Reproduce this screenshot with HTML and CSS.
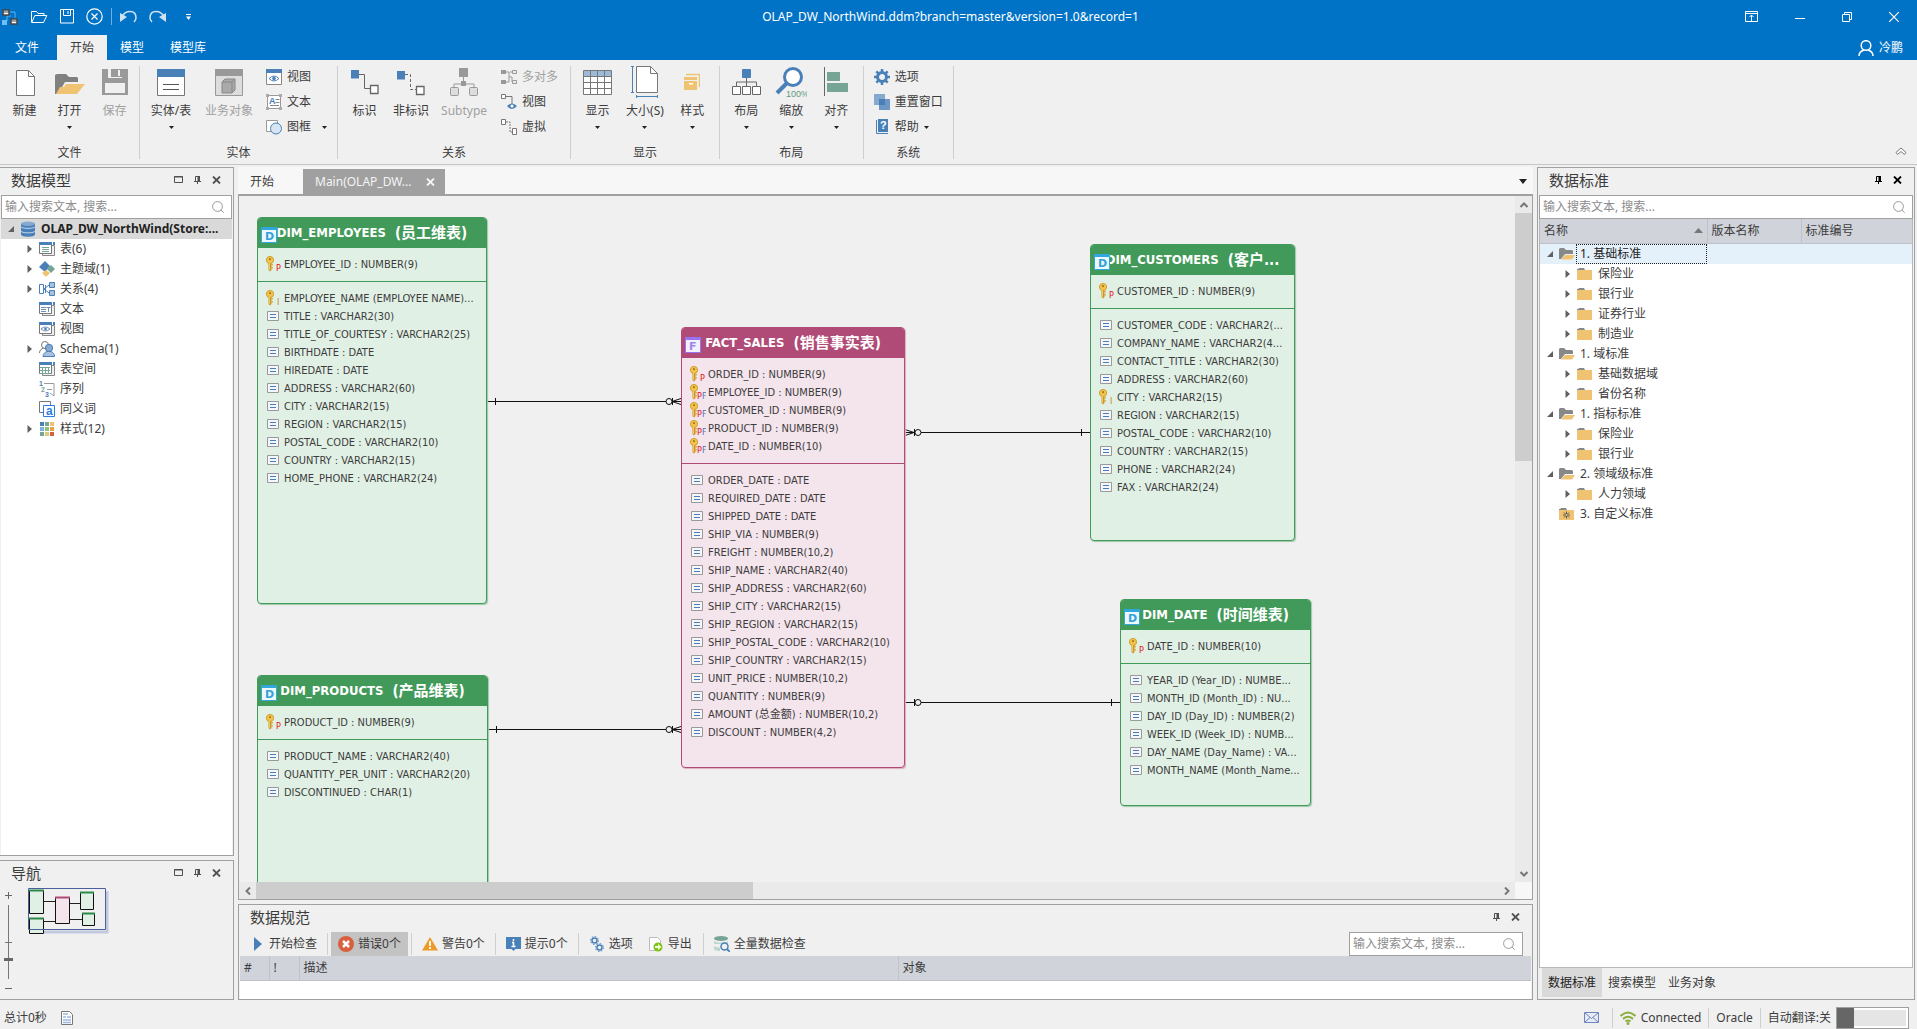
FILE: index.html
```html
<!DOCTYPE html>
<html lang="zh-CN">
<head>
<meta charset="utf-8">
<title>OLAP_DW_NorthWind.ddm</title>
<link rel="stylesheet" href="styles.css">
</head>
<body>
<svg class="sprite" aria-hidden="true">
  <symbol id="caret" viewBox="0 0 5 3"><path d="M0 0h5L2.500 3z" fill="#222"/></symbol>
  <symbol id="search" viewBox="0 0 12 12"><circle cx="5.500" cy="5.500" r="4.900" fill="none" stroke="#999"/><path d="M9 9l2.700 2.700" stroke="#999"/></symbol>
  <symbol id="restore" viewBox="0 0 9 8"><path d="M.5.5h8v6h-8zM0 1h9" fill="none" stroke="currentColor"/></symbol>
  <symbol id="pin" viewBox="0 0 7 8"><path d="M1.500 5V.5h4V5M0 5.500h7M3.500 5v3" fill="none" stroke="currentColor"/><path d="M3.500 0h2.500v5H3.500z" fill="currentColor"/></symbol>
  <symbol id="close" viewBox="0 0 9 8"><path d="M1 .5l7 7M8 .5l-7 7" stroke="currentColor" stroke-width="1.800"/></symbol>
  <symbol id="open-tri" viewBox="0 0 6 6"><path d="M6 0v6H0z" fill="#606060"/></symbol>
  <symbol id="shut-tri" viewBox="0 0 5 8"><path d="M0 0l4.500 4L0 8z" fill="#606060"/></symbol>
  <symbol id="folder" viewBox="0 0 16 16"><path d="M0 3h1l1-1h5l1 2H0z" fill="#888"/><path d="M0 4h15v10H0z" fill="#efc372"/></symbol>
  <symbol id="folder-open" viewBox="0 0 16 16"><path d="M0 3l1-1h4l2 2h6l1 1v3H6l-4 5H0z" fill="#888"/><path d="M6 9h10l-3 4.500H2z" fill="#efc372"/></symbol>
  <symbol id="folder-star" viewBox="0 0 16 16"><path d="M0 3h1l1-1h5l1 2H0z" fill="#888"/><path d="M0 4h15v10H0z" fill="#efc372"/><path d="M7.500 5.500v7M4 9h7M5 6.500l5 5M10 6.500l-5 5" stroke="#555"/><circle cx="7.500" cy="9" r="1" fill="#efc372"/></symbol>
  <symbol id="col" viewBox="0 0 16 16"><path d="M1.500 3.500h11v9h-11z" fill="#f4f6fa" stroke="#999"/><path d="M4 6.500h6M4 9.500h6" stroke="#4b7bb8"/></symbol>
  <symbol id="key" viewBox="0 0 16 16"><path d="M2.500 6h3v8l-1.500 1.500L2.500 14z" fill="#c9962b"/><path d="M5 8h2v1.500H5zM5 11h2v1.500H5z" fill="#dfb14a"/><circle cx="4" cy="4" r="3.600" fill="#f3c54c" stroke="#d09f33"/><circle cx="4" cy="3.200" r="1.100" fill="#a97b22"/><path d="M3.500 7v7" stroke="#f0c861"/></symbol>
  <symbol id="key-p" viewBox="0 0 16 16"><use href="#key" width="16" height="16"/><text x="10" y="15" class="tag-p">P</text></symbol>
  <symbol id="key-i" viewBox="0 0 16 16"><use href="#key" width="16" height="16"/><text x="11" y="15" class="tag-i">I</text></symbol>
  <symbol id="key-pf" viewBox="0 0 16 16"><use href="#key" width="16" height="16"/><text x="7" y="15" class="tag-p">P</text><text x="12" y="15" class="tag-f">F</text></symbol>
  <symbol id="dim" viewBox="0 0 16 16"><path d="M.5.5h15v15H.5z" fill="#edf7fc" stroke="#31a8dc"/><path d="M0 0h16v3H0z" fill="#31a8dc"/><text x="4" y="13" class="kind-d">D</text></symbol>
  <symbol id="fact" viewBox="0 0 16 16"><path d="M.5.5h15v15H.5z" fill="#f3effe" stroke="#9673f0"/><path d="M0 0h16v3H0z" fill="#9673f0"/><text x="4" y="13" class="kind-f">F</text></symbol>
  <symbol id="win" viewBox="0 0 16 16"><path d="M3.500 4.500h12v10h-12z" fill="#eee" stroke="#888"/><path d="M.5 1.500h12v11H.5z" fill="#fff" stroke="#777"/><path d="M0 1h13v3H0zM14 1h2v3h-2z" fill="#4a80b8"/></symbol>
</svg>

<header class="titlebar">
  <div class="quick">
    <svg width="17" height="18" viewBox="0 0 17 18"><path d="M8 4h5v6M5 13v-5h4" fill="none" stroke="#5cb3f0"/><path d="M1 2h6v5H1zM9 11h6v5H9z" fill="#fff" stroke="#444" stroke-width="1.500"/><path d="M1 4h6M9 13h6" stroke="#444"/><path d="M0 12h5v5H0z" fill="#6ec0f7"/></svg>
    <button aria-label="打开"><svg width="17" height="14" viewBox="0 0 17 14"><path d="M.5 12.500V1.500h5l1.500 2h6v2M.8 12.500l3-7h12l-3.300 7z" fill="none" stroke="#fff"/></svg></button>
    <button aria-label="保存"><svg width="14" height="15" viewBox="0 0 14 15"><path d="M.5.5h13v13.500H.5zM3.500.5v6h7v-6M8 2v3" fill="none" stroke="#fff"/></svg></button>
    <button aria-label="关闭文件"><svg width="17" height="17" viewBox="0 0 17 17"><circle cx="8.500" cy="8.500" r="7.700" fill="none" stroke="#fff" stroke-width="1.200"/><path d="M5.500 5.500l6 6M11.500 5.500l-6 6" stroke="#fff" stroke-width="1.200"/></svg></button>
    <i class="bar"></i>
    <button aria-label="撤销"><svg width="17" height="13" viewBox="0 0 17 13"><path d="M2 7c3-7 14-8 14 1 0 1-1 3-2 4" fill="none" stroke="#d0e2f2" stroke-width="1.500"/><path d="M0 3v9l7-5z" fill="#d0e2f2"/></svg></button>
    <button aria-label="重做"><svg width="17" height="13" viewBox="0 0 17 13"><path d="M15 7C12 0 1-1 1 8c0 1 1 3 2 4" fill="none" stroke="#d0e2f2" stroke-width="1.500"/><path d="M17 3v9l-7-5z" fill="#d0e2f2"/></svg></button>
    <button aria-label="自定义"><svg width="5" height="6" viewBox="0 0 5 6"><path d="M0 .5h5" stroke="#fff"/><path d="M0 2.500h5L2.500 6z" fill="#fff"/></svg></button>
  </div>
  <h1>OLAP_DW_NorthWind.ddm?branch=master&amp;version=1.0&amp;record=1</h1>
  <div class="winbtns">
    <button aria-label="功能区"><svg width="13" height="11" viewBox="0 0 13 11"><path d="M.5.5h12v10H.5zM0 2.500h13M6.500 4v6M4.500 6l2-2 2 2" fill="none" stroke="#fff"/></svg></button>
    <button aria-label="最小化"><svg width="10" height="11" viewBox="0 0 10 11"><path d="M0 7.500h10" stroke="#fff"/></svg></button>
    <button aria-label="还原"><svg width="10" height="10" viewBox="0 0 10 10"><path d="M.5 2.500h7v7h-7zM2.500 2V.5h7v7H8" fill="none" stroke="#fff"/></svg></button>
    <button aria-label="关闭"><svg width="10" height="10" viewBox="0 0 10 10"><path d="M0 0l10 10M10 0L0 10" stroke="#fff" stroke-width="1.200"/></svg></button>
  </div>
</header>

<nav class="menubar">
  <button>文件</button><button class="on">开始</button><button>模型</button><button>模型库</button>
  <a class="user" href="#user"><svg width="16" height="16" viewBox="0 0 16 16"><circle cx="8" cy="5.500" r="4.800" fill="none" stroke="#fff" stroke-width="1.500"/><path d="M1 16c0-3 2-5 5-6M15 16c0-3-2-5-5-6" fill="none" stroke="#fff" stroke-width="1.500"/></svg>冷鹏</a>
</nav>

<section class="ribbon">
  <div class="group tight">
    <div class="tools">
      <button class="big"><svg width="28" height="32" viewBox="0 0 28 32"><path d="M5.500 4.500h12l6 6v19h-18z" fill="#fff" stroke="#777"/><path d="M17.500 4.500v6h6" fill="none" stroke="#777"/></svg>新建</button>
      <button class="big"><svg width="30" height="32" viewBox="0 0 30 32"><path d="M0 28V9l2-1h9l3 3h8l1 1v4H10L3 28z" fill="#808080"/><path d="M11 18h19l-8 10H1l4-7h4z" fill="#efc372"/></svg>打开<svg class="caret" width="5" height="3"><use href="#caret"/></svg></button>
      <button class="big" disabled><svg width="26" height="32" viewBox="0 0 26 32"><path d="M0 3h26v26H0z" fill="#9a9a9a"/><path d="M6 3h14v9H6zM3 17h20v10H3z" fill="#f0f0f0"/><path d="M9 3h11v8H9z" fill="#9a9a9a"/><path d="M16 4h2v6h-2zM6 3h2v9H6z" fill="#f0f0f0"/></svg>保存</button>
    </div>
    <h2>文件</h2>
  </div>
  <div class="group tight">
    <div class="tools">
      <button class="big wide"><svg width="28" height="32" viewBox="0 0 28 32"><path d="M.5 3.500h27v26H.5z" fill="#fff" stroke="#777"/><path d="M0 3h28v8H0z" fill="#4a80b8"/><path d="M6 18.500h16M6 23.500h16" stroke="#555"/></svg>实体/表<svg class="caret" width="5" height="3"><use href="#caret"/></svg></button>
      <button class="big wide" disabled><svg width="28" height="32" viewBox="0 0 28 32"><path d="M.5 3.500h27v26H.5z" fill="#ddd" stroke="#999"/><path d="M0 3h28v7H0z" fill="#999"/><path d="M7 16l3-3h10v11l-3 3H7z" fill="#aaa" stroke="#888"/><path d="M7 16h10v11M17 16l3-3" fill="none" stroke="#888"/></svg>业务对象</button>
      <div class="smalls">
        <button><svg width="16" height="16" viewBox="0 0 16 16"><path d="M.5.5h15v15H.5z" fill="#fff" stroke="#888"/><path d="M0 0h16v4H0z" fill="#4a80b8"/><path d="M3 9.500q5-5 10 0q-5 5-10 0z" fill="none" stroke="#4a80b8"/><circle cx="8" cy="9.500" r="1.800" fill="#4a80b8"/></svg>视图</button>
        <button><svg width="16" height="16" viewBox="0 0 16 16"><path d="M1.500 1.500h13v13h-13z" fill="#fff" stroke="#999"/><path d="M0 0h3v3H0zM13 0h3v3h-3zM0 13h3v3H0zM13 13h3v3h-3z" fill="#aaa"/><path d="M9.500 5.500h4M9.500 8.500h4M4 11.500h9" stroke="#888"/><text x="3" y="10" class="glyph">A</text></svg>文本</button>
        <button><svg width="16" height="16" viewBox="0 0 16 16"><path d="M.5 1.500h11v11H.5z" fill="#fff" stroke="#999"/><circle cx="10" cy="9.500" r="5.500" fill="#d7e4f2" stroke="#4a80b8"/></svg>图框<svg class="caret" width="5" height="3"><use href="#caret"/></svg></button>
      </div>
    </div>
    <h2>实体</h2>
  </div>
  <div class="group">
    <div class="tools">
      <button class="big"><svg width="30" height="32" viewBox="0 0 30 32"><path d="M9 8.500h5.500v14H20" fill="none" stroke="#666"/><path d="M1 4h8v8.500H1z" fill="#4a80b8"/><path d="M20.500 19.500h7.500v8h-7.500z" fill="#fff" stroke="#666" stroke-width="1.300"/></svg>标识</button>
      <button class="big"><svg width="30" height="32" viewBox="0 0 30 32"><path d="M9 8.500h5.500v15H20" fill="none" stroke="#666" stroke-dasharray="3 2"/><path d="M1 5h8v8.500H1z" fill="#4a80b8"/><path d="M20.500 20.500h7.500v8h-7.500z" fill="#fff" stroke="#666" stroke-width="1.300"/></svg>非标识</button>
      <button class="big" disabled><svg width="28" height="32" viewBox="0 0 28 32"><path d="M13.500 10v8M4 22v-4h20v4" fill="none" stroke="#999"/><path d="M9 2h9v9H9zM11 15h5v5h-5z" fill="#999"/><rect x=".5" y="21.500" width="8" height="8" rx="1" fill="#ddd" stroke="#999"/><rect x="19.500" y="21.500" width="8" height="8" rx="1" fill="#ddd" stroke="#999"/></svg>Subtype</button>
      <div class="smalls">
        <button disabled><svg width="16" height="16" viewBox="0 0 16 16"><path d="M5 3h3v10H5M11 3H9M8 8h3v5" fill="none" stroke="#999"/><path d="M0 1h5v4H0zM0 11h5v4H0z" fill="#999"/><path d="M11.500 1.500h4v3h-4zM11.500 11.500h4v3h-4z" fill="#eee" stroke="#999"/></svg>多对多</button>
        <button><svg width="16" height="16" viewBox="0 0 16 16"><path d="M4 2.500h7V10" fill="none" stroke="#777"/><path d="M.5.500h4v4h-4z" fill="#fff" stroke="#777"/><path d="M6 12q5-5 10 0q-5 6-10 0z" fill="#4a80b8"/><circle cx="11" cy="12" r="1.500" fill="#fff"/></svg>视图</button>
        <button><svg width="16" height="16" viewBox="0 0 16 16"><path d="M5 3h4v10h2" fill="none" stroke="#777" stroke-dasharray="2 1"/><path d="M.5.5h4v5h-4zM11.500 9.500h4v6h-4z" fill="#fff" stroke="#777"/></svg>虚拟</button>
      </div>
    </div>
    <h2>关系</h2>
  </div>
  <div class="group">
    <div class="tools">
      <button class="big"><svg width="29" height="32" viewBox="0 0 29 32"><path d="M.5 4.500h28v24H.5z" fill="#fff" stroke="#777"/><path d="M1 5h27v5H1z" fill="#9dbad8"/><path d="M0 10.500h29M0 16.500h29M0 22.500h29M7.500 4v24M14.500 4v24M21.500 4v24" stroke="#777"/></svg>显示<svg class="caret" width="5" height="3"><use href="#caret"/></svg></button>
      <button class="big"><svg width="27" height="32" viewBox="0 0 27 32"><path d="M5.500.5h14l7 7v19h-21z" fill="#fff" stroke="#777"/><path d="M19.500.5v7h7" fill="none" stroke="#777"/><path d="M1.500 0v27M0 .5h3M0 26.500h3M5 30.500h22M5.500 29v3M26.500 29v3" stroke="#4a80b8"/></svg>大小(S)<svg class="caret" width="5" height="3"><use href="#caret"/></svg></button>
      <button class="big"><svg width="16" height="32" viewBox="0 0 16 32"><path d="M2 8.500h13.500V21" fill="none" stroke="#efc372" stroke-width="1.500"/><path d="M0 11h13v3H0zM0 15h13v9H0z" fill="#efc372"/><path d="M5 17h4v1.500H5z" fill="#fff"/></svg>样式<svg class="caret" width="5" height="3"><use href="#caret"/></svg></button>
    </div>
    <h2>显示</h2>
  </div>
  <div class="group">
    <div class="tools">
      <button class="big"><svg width="29" height="32" viewBox="0 0 29 32"><path d="M14.500 11v10M4.500 21v-5h20v5" fill="none" stroke="#666"/><rect x="10" y="3" width="9" height="9" rx="1" fill="#4a80b8"/><path d="M.5 20.500h8v8h-8zM10.500 20.500h8v8h-8zM20.500 20.500h8v8h-8z" fill="#fff" stroke="#666"/></svg>布局<svg class="caret" width="5" height="3"><use href="#caret"/></svg></button>
      <button class="big"><svg width="32" height="32" viewBox="0 0 32 32"><circle cx="18" cy="11" r="8.500" fill="#fff" stroke="#4a80b8" stroke-width="3"/><path d="M12 17l-10 10" stroke="#4a80b8" stroke-width="4"/><text x="11" y="31" class="percent">100%</text></svg>缩放<svg class="caret" width="5" height="3"><use href="#caret"/></svg></button>
      <button class="big"><svg width="24" height="32" viewBox="0 0 24 32"><path d="M.5 1v29" stroke="#666"/><path d="M3 6h13v9H3zM3 17h21v9H3z" fill="#77a595"/></svg>对齐<svg class="caret" width="5" height="3"><use href="#caret"/></svg></button>
    </div>
    <h2>布局</h2>
  </div>
  <div class="group tight">
    <div class="tools">
      <div class="smalls">
        <button><svg width="16" height="16" viewBox="0 0 16 16"><circle cx="8" cy="8" r="4.500" fill="none" stroke="#4a80b8" stroke-width="3"/><path d="M8 0v3M8 13v3M0 8h3M13 8h3M2.300 2.300l2 2M11.700 11.700l2 2M13.700 2.300l-2 2M4.300 11.700l-2 2" stroke="#4a80b8" stroke-width="2.500"/></svg>选项</button>
        <button><svg width="16" height="16" viewBox="0 0 16 16"><path d="M0 0h11v11H0z" fill="#86a9d0"/><path d="M5 5h11v11H5z" fill="#6c97c6"/><path d="M5 5h6v6H5z" fill="#4a80b8"/></svg>重置窗口</button>
        <button><svg width="16" height="16" viewBox="0 0 16 16"><path d="M4 0h10v13H4z" fill="#4a80b8"/><path d="M2.500 1v13.500H14" fill="none" stroke="#4a80b8"/><text x="6" y="10" class="glyph-w">?</text></svg>帮助<svg width="5" height="3"><use href="#caret"/></svg></button>
      </div>
    </div>
    <h2>系统</h2>
  </div>
  <button class="collapse" aria-label="折叠功能区"><svg width="12" height="9" viewBox="0 0 12 9"><path d="M1 5.500L6 1l5 4.500-1.500 2L6 4.500l-3.500 3z" fill="#fff" stroke="#777"/></svg></button>
</section>

<main>
  <aside class="left">
    <section class="panel grow">
      <div class="caption"><h3>数据模型</h3><button aria-label="窗口"><svg width="9" height="8"><use href="#restore"/></svg></button><button aria-label="固定"><svg width="7" height="8"><use href="#pin"/></svg></button><button aria-label="关闭"><svg width="9" height="8"><use href="#close"/></svg></button></div>
      <label class="search"><input type="text" placeholder="输入搜索文本, 搜索..." aria-label="搜索模型"><svg width="12" height="12"><use href="#search"/></svg></label>
      <ul class="tree">
        <li class="root"><svg class="tri" width="6" height="6"><use href="#open-tri"/></svg><svg class="ico" width="16" height="16" viewBox="0 0 16 16"><path d="M1 2.500v11c0 3 14 3 14 0v-11z" fill="#4a80b8"/><path d="M1 5.500c0 2.500 14 2.500 14 0M1 10c0 2.500 14 2.500 14 0" fill="none" stroke="#c6d8ec"/><ellipse cx="8" cy="2.700" rx="7" ry="2.200" fill="#86a9d0"/></svg>OLAP_DW_NorthWind(Store:...</li>
        <li><svg class="tri" width="5" height="8"><use href="#shut-tri"/></svg><svg class="ico" width="16" height="16" viewBox="0 0 16 16"><use href="#win" width="16" height="16"/><path d="M3 6.500h7M3 8.500h7M3 10.500h7" stroke="#77a595"/></svg>表(6)</li>
        <li><svg class="tri" width="5" height="8"><use href="#shut-tri"/></svg><svg class="ico" width="16" height="16" viewBox="0 0 16 16"><path d="M6 0l5 5-5 6-6-5z" fill="#4a80b8"/><path d="M12 4l4 4-4 4-4-4z" fill="#77a595"/><path d="M7 9l4 3-4 4-4-4z" fill="#efc372"/></svg>主题域(1)</li>
        <li><svg class="tri" width="5" height="8"><use href="#shut-tri"/></svg><svg class="ico" width="16" height="16" viewBox="0 0 16 16"><path d="M.5 3.500h4v9h-4z" fill="#fff" stroke="#4a80b8"/><path d="M5 8l5-4M5 8l5 4M6.500 4v8" stroke="#4a80b8" fill="none"/><path d="M10.500 1.500h5v5h-5zM10.500 9.500h5v5h-5z" fill="#a8c1de" stroke="#4a80b8"/></svg>关系(4)</li>
        <li><i class="tri"></i><svg class="ico" width="16" height="16" viewBox="0 0 16 16"><use href="#win" width="16" height="16"/><path d="M2 6.500h5M2 8.500h5M2 10.500h5M7.500 6.500h4M9.500 6v5" stroke="#6b8fb5"/></svg>文本</li>
        <li><i class="tri"></i><svg class="ico" width="16" height="16" viewBox="0 0 16 16"><use href="#win" width="16" height="16"/><path d="M2 8q4.500-4 9 0q-4.500 4-9 0z" fill="none" stroke="#6b8fb5"/><circle cx="6.500" cy="8" r="1.300" fill="#4a80b8"/></svg>视图</li>
        <li><svg class="tri" width="5" height="8"><use href="#shut-tri"/></svg><svg class="ico" width="16" height="16" viewBox="0 0 16 16"><circle cx="6" cy="4" r="3.500" fill="#fff" stroke="#777"/><path d="M.5 12c0-3 2-4 4-5" fill="none" stroke="#777"/><circle cx="10" cy="7" r="3.700" fill="#86a9d0" stroke="#4a80b8"/><path d="M4 15.500c0-3 2-4 4-5h4c2 1 3.500 2 3.500 5z" fill="#a8c1de" stroke="#4a80b8"/></svg>Schema(1)</li>
        <li><i class="tri"></i><svg class="ico" width="16" height="16" viewBox="0 0 16 16"><use href="#win" width="16" height="16"/><path d="M1 6.500h10M1 9.500h10M1 12.500h10M3.500 6v7M6.500 6v7M9.500 6v7" stroke="#77a595"/></svg>表空间</li>
        <li><i class="tri"></i><svg class="ico" width="16" height="16" viewBox="0 0 16 16"><path d="M5 2.500h10V15l-4-3M8 8.500h5" fill="none" stroke="#999"/><text x="0" y="5" class="seq">1</text><text x="2" y="11" class="seq g">2</text><text x="6" y="16" class="seq">3</text></svg>序列</li>
        <li><i class="tri"></i><svg class="ico" width="16" height="16" viewBox="0 0 16 16"><path d="M.5.5h11v11H.5z" fill="#fff" stroke="#777"/><path d="M4.500 4.500h11v11h-11z" fill="#fff" stroke="#2b7de0"/><text x="7" y="14" class="syn">a</text></svg>同义词</li>
        <li><svg class="tri" width="5" height="8"><use href="#shut-tri"/></svg><svg class="ico" width="16" height="16" viewBox="0 0 16 16"><path d="M1 1h4v4H1z" fill="#4a80b8"/><path d="M6 1h4v4H6zM1 11h4v4H1z" fill="#77a595"/><path d="M11 1h4v4h-4z" fill="#efc372"/><path d="M1 6h4v4H1z" fill="#7fb3d8"/><path d="M6 6h4v4H6z" fill="#8cc07c"/><path d="M11 6h4v4h-4z" fill="#e8a33c"/><path d="M6 11h4v4H6z" fill="#d9cc7a"/><path d="M11 11h4v4h-4z" fill="#d9603f"/></svg>样式(12)</li>
      </ul>
    </section>
    <section class="panel navigator">
      <div class="caption"><h3>导航</h3><button aria-label="窗口"><svg width="9" height="8"><use href="#restore"/></svg></button><button aria-label="固定"><svg width="7" height="8"><use href="#pin"/></svg></button><button aria-label="关闭"><svg width="9" height="8"><use href="#close"/></svg></button></div>
      <div class="overview">
        <div class="zoomer">
          <button aria-label="放大"><svg width="7" height="7" viewBox="0 0 7 7"><path d="M0 3.500h7M3.500 0v7" stroke="#666"/></svg></button>
          <input type="range" min="0" max="100" value="25" aria-label="缩放比例">
          <button aria-label="缩小"><svg width="7" height="7" viewBox="0 0 7 7"><path d="M0 3.500h7" stroke="#666"/></svg></button>
        </div>
        <svg class="map" width="82" height="48" viewBox="0 0 82 48">
          <path d="M79 3v41H3" fill="none" stroke="#c3c9dd" stroke-width="3"/>
          <path d="M.5.5h77v41H.5z" fill="#f0f0f0" stroke="#4a5f9b"/>
          <path d="M16 13.500h12M16 33.500h12M41 15.500h12M41 31.500h14" stroke="#222"/>
          <path d="M1.500 2.500h14v23h-14zM1.500 30.500h14v15h-14zM52.500 4.500h13v17h-13zM54.500 25.500h12v12h-12z" fill="#e1f0e5" stroke="#111"/>
          <path d="M1 2.500h15M1 30.500h15M52 4.500h14M54 25.500h13" stroke="#2c8a48" stroke-width="2"/>
          <path d="M27.500 9.500h14v26h-14z" fill="#f4e4ec" stroke="#111"/><path d="M27 9.500h15" stroke="#b04a76" stroke-width="2"/>
          <path d="M1 41.500h76" stroke="#4a5f9b"/>
        </svg>
      </div>
    </section>
  </aside>

  <div class="center">
    <section class="document">
      <div class="doctabs">
        <button>开始</button>
        <div class="doctab"><button>Main(OLAP_DW...</button><button aria-label="关闭标签"><svg width="9" height="8"><use href="#close"/></svg></button></div>
        <button class="more" aria-label="标签列表"><svg width="8" height="5"><use href="#caret"/></svg></button>
      </div>
      <div class="viewport">
        <div class="canvas">
          <svg class="wires" width="1276" height="686" viewBox="0 0 1276 686" aria-hidden="true">
            <path d="M248 205.500h194M249 533.500h193M666 236.500h185M666 506.500h215" stroke="#111"/>
            <path d="M256.500 202v7M257.500 530v7M842.500 233v7M872.500 503v7M433.500 202v7M433.500 530v7M675.500 233v7M675.500 503v7" stroke="#111"/>
            <path d="M433 205.500l9-3M433 205.500l9 3M433 533.500l9-3M433 533.500l9 3M675 236.500l-9-3M675 236.500l-9 3" stroke="#111"/>
            <g fill="#f0f0f0" stroke="#111"><circle cx="430" cy="205.500" r="3"/><circle cx="430" cy="533.500" r="3"/><circle cx="679" cy="236.500" r="3"/><circle cx="679" cy="506.500" r="3"/></g>
          </svg>

          <article class="entity employees">
            <h4><svg width="16" height="16"><use href="#dim"/></svg>DIM_EMPLOYEES <span>(员工维表)</span></h4>
            <ul><li><svg width="16" height="16"><use href="#key-p"/></svg>EMPLOYEE_ID : NUMBER(9)</li></ul>
            <ul>
              <li><svg width="16" height="16"><use href="#key-i"/></svg>EMPLOYEE_NAME (EMPLOYEE NAME)...</li>
              <li><svg width="16" height="16"><use href="#col"/></svg>TITLE : VARCHAR2(30)</li>
              <li><svg width="16" height="16"><use href="#col"/></svg>TITLE_OF_COURTESY : VARCHAR2(25)</li>
              <li><svg width="16" height="16"><use href="#col"/></svg>BIRTHDATE : DATE</li>
              <li><svg width="16" height="16"><use href="#col"/></svg>HIREDATE : DATE</li>
              <li><svg width="16" height="16"><use href="#col"/></svg>ADDRESS : VARCHAR2(60)</li>
              <li><svg width="16" height="16"><use href="#col"/></svg>CITY : VARCHAR2(15)</li>
              <li><svg width="16" height="16"><use href="#col"/></svg>REGION : VARCHAR2(15)</li>
              <li><svg width="16" height="16"><use href="#col"/></svg>POSTAL_CODE : VARCHAR2(10)</li>
              <li><svg width="16" height="16"><use href="#col"/></svg>COUNTRY : VARCHAR2(15)</li>
              <li><svg width="16" height="16"><use href="#col"/></svg>HOME_PHONE : VARCHAR2(24)</li>
            </ul>
          </article>

          <article class="entity products">
            <h4><svg width="16" height="16"><use href="#dim"/></svg>DIM_PRODUCTS <span>(产品维表)</span></h4>
            <ul><li><svg width="16" height="16"><use href="#key-p"/></svg>PRODUCT_ID : NUMBER(9)</li></ul>
            <ul>
              <li><svg width="16" height="16"><use href="#col"/></svg>PRODUCT_NAME : VARCHAR2(40)</li>
              <li><svg width="16" height="16"><use href="#col"/></svg>QUANTITY_PER_UNIT : VARCHAR2(20)</li>
              <li><svg width="16" height="16"><use href="#col"/></svg>DISCONTINUED : CHAR(1)</li>
            </ul>
          </article>

          <article class="entity fact sales">
            <h4><svg width="16" height="16"><use href="#fact"/></svg>FACT_SALES <span>(销售事实表)</span></h4>
            <ul>
              <li><svg width="16" height="16"><use href="#key-p"/></svg>ORDER_ID : NUMBER(9)</li>
              <li><svg width="16" height="16"><use href="#key-pf"/></svg>EMPLOYEE_ID : NUMBER(9)</li>
              <li><svg width="16" height="16"><use href="#key-pf"/></svg>CUSTOMER_ID : NUMBER(9)</li>
              <li><svg width="16" height="16"><use href="#key-pf"/></svg>PRODUCT_ID : NUMBER(9)</li>
              <li><svg width="16" height="16"><use href="#key-pf"/></svg>DATE_ID : NUMBER(10)</li>
            </ul>
            <ul>
              <li><svg width="16" height="16"><use href="#col"/></svg>ORDER_DATE : DATE</li>
              <li><svg width="16" height="16"><use href="#col"/></svg>REQUIRED_DATE : DATE</li>
              <li><svg width="16" height="16"><use href="#col"/></svg>SHIPPED_DATE : DATE</li>
              <li><svg width="16" height="16"><use href="#col"/></svg>SHIP_VIA : NUMBER(9)</li>
              <li><svg width="16" height="16"><use href="#col"/></svg>FREIGHT : NUMBER(10,2)</li>
              <li><svg width="16" height="16"><use href="#col"/></svg>SHIP_NAME : VARCHAR2(40)</li>
              <li><svg width="16" height="16"><use href="#col"/></svg>SHIP_ADDRESS : VARCHAR2(60)</li>
              <li><svg width="16" height="16"><use href="#col"/></svg>SHIP_CITY : VARCHAR2(15)</li>
              <li><svg width="16" height="16"><use href="#col"/></svg>SHIP_REGION : VARCHAR2(15)</li>
              <li><svg width="16" height="16"><use href="#col"/></svg>SHIP_POSTAL_CODE : VARCHAR2(10)</li>
              <li><svg width="16" height="16"><use href="#col"/></svg>SHIP_COUNTRY : VARCHAR2(15)</li>
              <li><svg width="16" height="16"><use href="#col"/></svg>UNIT_PRICE : NUMBER(10,2)</li>
              <li><svg width="16" height="16"><use href="#col"/></svg>QUANTITY : NUMBER(9)</li>
              <li><svg width="16" height="16"><use href="#col"/></svg>AMOUNT (总金额) : NUMBER(10,2)</li>
              <li><svg width="16" height="16"><use href="#col"/></svg>DISCOUNT : NUMBER(4,2)</li>
            </ul>
          </article>

          <article class="entity customers">
            <h4><svg width="16" height="16"><use href="#dim"/></svg>DIM_CUSTOMERS <span>(客户...</span></h4>
            <ul><li><svg width="16" height="16"><use href="#key-p"/></svg>CUSTOMER_ID : NUMBER(9)</li></ul>
            <ul>
              <li><svg width="16" height="16"><use href="#col"/></svg>CUSTOMER_CODE : VARCHAR2(...</li>
              <li><svg width="16" height="16"><use href="#col"/></svg>COMPANY_NAME : VARCHAR2(4...</li>
              <li><svg width="16" height="16"><use href="#col"/></svg>CONTACT_TITLE : VARCHAR2(30)</li>
              <li><svg width="16" height="16"><use href="#col"/></svg>ADDRESS : VARCHAR2(60)</li>
              <li><svg width="16" height="16"><use href="#key-i"/></svg>CITY : VARCHAR2(15)</li>
              <li><svg width="16" height="16"><use href="#col"/></svg>REGION : VARCHAR2(15)</li>
              <li><svg width="16" height="16"><use href="#col"/></svg>POSTAL_CODE : VARCHAR2(10)</li>
              <li><svg width="16" height="16"><use href="#col"/></svg>COUNTRY : VARCHAR2(15)</li>
              <li><svg width="16" height="16"><use href="#col"/></svg>PHONE : VARCHAR2(24)</li>
              <li><svg width="16" height="16"><use href="#col"/></svg>FAX : VARCHAR2(24)</li>
            </ul>
          </article>

          <article class="entity date">
            <h4><svg width="16" height="16"><use href="#dim"/></svg>DIM_DATE <span>(时间维表)</span></h4>
            <ul><li><svg width="16" height="16"><use href="#key-p"/></svg>DATE_ID : NUMBER(10)</li></ul>
            <ul>
              <li><svg width="16" height="16"><use href="#col"/></svg>YEAR_ID (Year_ID) : NUMBE...</li>
              <li><svg width="16" height="16"><use href="#col"/></svg>MONTH_ID (Month_ID) : NU...</li>
              <li><svg width="16" height="16"><use href="#col"/></svg>DAY_ID (Day_ID) : NUMBER(2)</li>
              <li><svg width="16" height="16"><use href="#col"/></svg>WEEK_ID (Week_ID) : NUMB...</li>
              <li><svg width="16" height="16"><use href="#col"/></svg>DAY_NAME (Day_Name) : VA...</li>
              <li><svg width="16" height="16"><use href="#col"/></svg>MONTH_NAME (Month_Name...</li>
            </ul>
          </article>
        </div>
        <div class="vbar">
          <button aria-label="向上"><svg width="8" height="6" viewBox="0 0 8 6"><path d="M.5 5L4 1.500 7.500 5" fill="none" stroke="#777" stroke-width="2"/></svg></button>
          <div class="track"><div class="thumb"></div></div>
          <button aria-label="向下"><svg width="8" height="6" viewBox="0 0 8 6"><path d="M.5 1L4 4.500 7.500 1" fill="none" stroke="#777" stroke-width="2"/></svg></button>
        </div>
        <div class="hbar">
          <button aria-label="向左"><svg width="6" height="8" viewBox="0 0 6 8"><path d="M5 .5L1.500 4 5 7.500" fill="none" stroke="#777" stroke-width="2"/></svg></button>
          <div class="track"><div class="thumb"></div></div>
          <button aria-label="向右"><svg width="6" height="8" viewBox="0 0 6 8"><path d="M1 .5L4.500 4 1 7.500" fill="none" stroke="#777" stroke-width="2"/></svg></button>
        </div>
      </div>
    </section>

    <section class="panel checks">
      <div class="caption"><h3>数据规范</h3><button aria-label="固定"><svg width="7" height="8"><use href="#pin"/></svg></button><button aria-label="关闭"><svg width="9" height="8"><use href="#close"/></svg></button></div>
      <div class="toolbar">
        <button><svg width="8" height="14" viewBox="0 0 8 14"><path d="M0 0l8 7-8 7z" fill="#4a80b8"/></svg>开始检查</button>
        <i class="sep"></i>
        <button class="pressed"><svg width="16" height="16" viewBox="0 0 16 16"><circle cx="8" cy="8" r="8" fill="#d9603f"/><path d="M5 5l6 6M11 5l-6 6" stroke="#fff" stroke-width="2.500"/></svg>错误0个</button>
        <i class="sep"></i>
        <button><svg width="16" height="16" viewBox="0 0 16 16"><path d="M8 1l8 13.500H0z" fill="#ec9a2a"/><path d="M8 5v5M8 11v2" stroke="#fff" stroke-width="1.800"/></svg>警告0个</button>
        <i class="sep"></i>
        <button><svg width="15" height="16" viewBox="0 0 15 16"><path d="M0 1h15v12H9.500l-2 2-2-2H0z" fill="#4a80b8"/><path d="M7.500 3v2M7.500 6v5M6 6.500h2M5.500 10.500h4" stroke="#fff" stroke-width="1.500"/></svg>提示0个</button>
        <i class="sep"></i>
        <button class="action"><svg width="14" height="16" viewBox="0 0 14 16"><g fill="none" stroke="#4a80b8"><circle cx="4.500" cy="4.500" r="2.500" stroke-width="1.500"/><circle cx="4.500" cy="4.500" r="4" stroke-dasharray="1.500 1.600"/><circle cx="9.500" cy="11.500" r="2.500" stroke-width="1.500"/><circle cx="9.500" cy="11.500" r="4" stroke-dasharray="1.500 1.600"/></g></svg>选项</button>
        <button class="action"><svg width="14" height="16" viewBox="0 0 14 16"><path d="M.5 1.500h8l3 3v10H.5z" fill="#fff" stroke="#bbb"/><circle cx="9" cy="11" r="4.500" fill="#7fc31c"/><path d="M6 10h3V8l3.500 3L9 14v-2H6z" fill="#f2ffd8"/></svg>导出</button>
        <i class="sep"></i>
        <button><svg width="16" height="16" viewBox="0 0 16 16"><ellipse cx="7" cy="2.500" rx="7" ry="2.500" fill="#77a595"/><path d="M0 5c3 2 11 2 14 0v3H0zM0 10c2 1.500 4 1.500 6 1.500V15c-3 0-6-1-6-2z" fill="#c0d6cd"/><circle cx="10.500" cy="10.500" r="3.500" fill="#f0f0f0" stroke="#4a80b8" stroke-width="1.500"/><path d="M13 13l3 3" stroke="#4a80b8" stroke-width="1.800"/></svg>全量数据检查</button>
        <label class="search"><input type="text" placeholder="输入搜索文本, 搜索..." aria-label="搜索检查结果"><svg width="12" height="12"><use href="#search"/></svg></label>
      </div>
      <table class="grid">
        <colgroup><col class="c-num"><col class="c-mark"><col class="c-desc"><col></colgroup>
        <thead><tr><th>#</th><th>!</th><th>描述</th><th>对象</th></tr></thead>
      </table>
    </section>
  </div>

  <aside class="panel right">
    <div class="caption dark"><h3>数据标准</h3><button aria-label="固定"><svg width="7" height="8"><use href="#pin"/></svg></button><button aria-label="关闭"><svg width="9" height="8"><use href="#close"/></svg></button></div>
    <label class="search"><input type="text" placeholder="输入搜索文本, 搜索..." aria-label="搜索标准"><svg width="12" height="12"><use href="#search"/></svg></label>
    <div class="standards">
      <table class="grid">
        <colgroup><col class="c-name"><col class="c-ver"><col></colgroup>
        <thead><tr><th><div class="sorted">名称<svg width="9" height="5" viewBox="0 0 9 5"><path d="M0 5h9L4.500 0z" fill="#777"/></svg></div></th><th>版本名称</th><th>标准编号</th></tr></thead>
        <tbody>
          <tr class="sel"><td><div class="cell"><svg class="tri" width="6" height="6"><use href="#open-tri"/></svg><svg class="ico" width="16" height="16"><use href="#folder-open"/></svg><span>1. 基础标准</span></div></td><td></td><td></td></tr>
          <tr><td><div class="cell sub"><svg class="tri" width="5" height="8"><use href="#shut-tri"/></svg><svg class="ico" width="16" height="16"><use href="#folder"/></svg><span>保险业</span></div></td><td></td><td></td></tr>
          <tr><td><div class="cell sub"><svg class="tri" width="5" height="8"><use href="#shut-tri"/></svg><svg class="ico" width="16" height="16"><use href="#folder"/></svg><span>银行业</span></div></td><td></td><td></td></tr>
          <tr><td><div class="cell sub"><svg class="tri" width="5" height="8"><use href="#shut-tri"/></svg><svg class="ico" width="16" height="16"><use href="#folder"/></svg><span>证券行业</span></div></td><td></td><td></td></tr>
          <tr><td><div class="cell sub"><svg class="tri" width="5" height="8"><use href="#shut-tri"/></svg><svg class="ico" width="16" height="16"><use href="#folder"/></svg><span>制造业</span></div></td><td></td><td></td></tr>
          <tr><td><div class="cell"><svg class="tri" width="6" height="6"><use href="#open-tri"/></svg><svg class="ico" width="16" height="16"><use href="#folder-open"/></svg><span>1. 域标准</span></div></td><td></td><td></td></tr>
          <tr><td><div class="cell sub"><svg class="tri" width="5" height="8"><use href="#shut-tri"/></svg><svg class="ico" width="16" height="16"><use href="#folder"/></svg><span>基础数据域</span></div></td><td></td><td></td></tr>
          <tr><td><div class="cell sub"><svg class="tri" width="5" height="8"><use href="#shut-tri"/></svg><svg class="ico" width="16" height="16"><use href="#folder"/></svg><span>省份名称</span></div></td><td></td><td></td></tr>
          <tr><td><div class="cell"><svg class="tri" width="6" height="6"><use href="#open-tri"/></svg><svg class="ico" width="16" height="16"><use href="#folder-open"/></svg><span>1. 指标标准</span></div></td><td></td><td></td></tr>
          <tr><td><div class="cell sub"><svg class="tri" width="5" height="8"><use href="#shut-tri"/></svg><svg class="ico" width="16" height="16"><use href="#folder"/></svg><span>保险业</span></div></td><td></td><td></td></tr>
          <tr><td><div class="cell sub"><svg class="tri" width="5" height="8"><use href="#shut-tri"/></svg><svg class="ico" width="16" height="16"><use href="#folder"/></svg><span>银行业</span></div></td><td></td><td></td></tr>
          <tr><td><div class="cell"><svg class="tri" width="6" height="6"><use href="#open-tri"/></svg><svg class="ico" width="16" height="16"><use href="#folder-open"/></svg><span>2. 领域级标准</span></div></td><td></td><td></td></tr>
          <tr><td><div class="cell sub"><svg class="tri" width="5" height="8"><use href="#shut-tri"/></svg><svg class="ico" width="16" height="16"><use href="#folder"/></svg><span>人力领域</span></div></td><td></td><td></td></tr>
          <tr><td><div class="cell"><i class="tri"></i><svg class="ico" width="16" height="16"><use href="#folder-star"/></svg><span>3. 自定义标准</span></div></td><td></td><td></td></tr>
        </tbody>
      </table>
    </div>
    <div class="foottabs"><button class="on">数据标准</button><button>搜索模型</button><button>业务对象</button></div>
  </aside>
</main>

<footer class="status">
  <span>总计0秒</span>
  <button class="report" aria-label="报告"><svg width="12" height="14" viewBox="0 0 12 14"><path d="M.5.5h8l3 3v10H.5z" fill="#fff" stroke="#777"/><path d="M2 3h5M2 6h3M6 6h4M2 9h8M2 11.500h8" stroke="#9db9e0" stroke-width="1.500"/></svg></button>
  <i class="fill"></i>
  <button class="mail" aria-label="消息"><svg width="15" height="11" viewBox="0 0 15 11"><path d="M.5.5h14v10H.5z" fill="#e6ebf8" stroke="#6f86bd"/><path d="M1 1l6.500 5.500L14 1M1 10l5-4.500M14 10L9 5.500" fill="none" stroke="#6f86bd"/></svg></button>
  <i class="sep"></i>
  <span class="net"><svg width="16" height="14" viewBox="0 0 16 14"><g fill="none" stroke="#8bae3e" stroke-width="2"><path d="M.5 5q7.500-7 15 0M3 8q5-4.500 10 0M5.500 10.500q2.500-2 5 0"/></g><circle cx="8" cy="12.500" r="1.500" fill="#8bae3e"/></svg>Connected</span>
  <i class="sep"></i>
  <span>Oracle</span>
  <i class="sep"></i>
  <label class="auto">自动翻译:关<input type="checkbox"></label>
</footer>
</body>
</html>
```
FILE: styles.css
```css
* { box-sizing: border-box; }
html, body { height: 100%; margin: 0; }
body {
  display: flex; flex-direction: column; overflow: hidden;
  background: #f0f0f0; color: #3c3c3c;
  font: 12px/16px "Noto Sans", "Noto Sans CJK SC", sans-serif;
}
h1, h2, h3, h4, ul { margin: 0; padding: 0; font-weight: normal; list-style: none; }
button {
  display: flex; align-items: center; padding: 0; border: 0;
  background: none; color: inherit; font: inherit; white-space: nowrap;
}
button:disabled { color: #a0a0a0; }
svg { display: block; flex: none; }
.sprite { position: absolute; width: 0; height: 0; }

/* letters inside icons */
.tag-p, .tag-f, .tag-i { font: 9px "DejaVu Sans Condensed", sans-serif; fill: #e8121c; }
.tag-f { fill: #3f78b5; }
.tag-i { fill: #c98425; }
.kind-d, .kind-f { font: bold 11px "DejaVu Sans", sans-serif; fill: #2fa3da; }
.kind-f { fill: #9c86ee; }
.glyph { font: bold 9px "Liberation Sans", sans-serif; fill: #4a80b8; }
.glyph-w { font: bold 11px "Liberation Sans", sans-serif; fill: #fff; }
.percent { font: 9px "Liberation Sans", sans-serif; fill: #5f9a83; }
.seq { font: bold 7px "Liberation Sans", sans-serif; fill: #4a80b8; }
.seq.g { fill: #77a595; }
.syn { font: bold 12px "Liberation Sans", sans-serif; fill: #2b7de0; }

/* title bar and menu */
.titlebar { display: grid; grid-template-columns: 1fr auto 1fr; align-items: center; height: 35px; flex: none; padding: 0 18px 2px 2px; background: #0173c7; color: #fff; }
.titlebar h1 { font-size: 12px; }
.quick { display: flex; align-items: center; gap: 12px; }
.quick .bar { width: 1px; height: 17px; margin: 0 -4px; background: #6fb0e0; }
.quick button:last-child { margin-left: 8px; }
.winbtns { display: flex; align-items: center; justify-content: flex-end; gap: 37px; }
.menubar { display: flex; flex: none; height: 25px; background: #0173c7; color: #fff; }
.menubar button { padding: 0 13px; }
.menubar button:first-child { padding: 0 18px 0 15px; }
.menubar .on { background: #f0f0f0; color: #3c3c3c; }
.user { display: flex; align-items: center; gap: 5px; margin-left: auto; padding-right: 14px; color: #fff; text-decoration: none; }

/* ribbon */
.ribbon { display: flex; flex: none; height: 105px; padding: 6px 0; border-bottom: 1px solid #c6c6c6; }
.group { display: flex; flex-direction: column; height: 93px; padding: 0 4px; border-right: 1px solid #cfcfcf; }
.group.tight { padding: 0 2px; }
.tools { display: flex; flex: 1; }
.group h2 { font-size: 12px; line-height: 12px; text-align: center; }
.big { flex-direction: column; justify-content: flex-start; min-width: 45px; padding: 0 6px; }
.big.wide { min-width: 58px; padding: 0 5px; }
.big > svg:first-child { margin-bottom: 5px; }
.big .caret { margin-top: 7px; }
.smalls { display: flex; flex-direction: column; gap: 9px; padding: 3px 8px 0; }
.smalls button { height: 16px; gap: 5px; }
.smalls .caret { margin-left: 6px; }
.collapse { align-self: flex-end; margin-left: auto; padding: 0 10px 2px 0; }

/* docked panels */
main { display: flex; flex: 1; min-height: 0; padding: 2px 2px 0 0; }
.left { display: flex; flex-direction: column; gap: 4px; width: 234px; flex: none; }
.panel { display: flex; flex-direction: column; border: 1px solid #a0a0a0; background: #f0f0f0; }
.left .panel { border-left-width: 0; padding: 0 1px; }
.grow { flex: 1; }
.caption { display: flex; align-items: center; gap: 11px; flex: none; height: 27px; padding: 0 11px 3px 10px; color: #505050; }
.caption.dark { color: #000; }
.caption h3 { flex: 1; font-size: 15px; color: #3c3c3c; }
.search { display: flex; align-items: center; flex: none; height: 24px; padding: 0 7px 0 3px; border: 1px solid #a0a0a0; background: #fff; }
.search input { flex: 1; min-width: 0; padding: 0; border: 0; outline: 0; background: none; font: inherit; }
.search input::placeholder { color: #8c8c8c; opacity: 1; }
.tree { flex: 1; background: #fff; }
.tree li { display: flex; align-items: center; height: 20px; padding-left: 26px; white-space: nowrap; }
.tree .root { padding-left: 7px; background: #d9d9d9; color: #222; font-weight: bold; }
.tri { width: 6px; margin-right: 6px; flex: none; }
.ico { margin-right: 5px; }

.navigator { height: 140px; flex: none; }
.overview { display: flex; align-items: flex-start; gap: 15px; padding-left: 3px; }
.zoomer { display: flex; flex-direction: column; align-items: center; gap: 6px; width: 9px; padding-top: 4px; }
.zoomer input {
  width: 9px; height: 74px; margin: 0; appearance: none; writing-mode: vertical-lr; direction: rtl;
  background: linear-gradient(#777, #777) 50% 50% / 1px 100% no-repeat, linear-gradient(#777, #777) 50% 50% / 7px 1px no-repeat;
}
.zoomer input::-webkit-slider-thumb { appearance: none; width: 9px; height: 3px; background: #666; }

/* document area */
.center { display: flex; flex: 1; flex-direction: column; gap: 4px; min-width: 0; margin: 0 4px; }
.document { display: flex; flex: 1; flex-direction: column; min-height: 0; background: #f7f7f7; padding-top: 2px; }
.doctabs { display: flex; flex: none; height: 27px; border-bottom: 2px solid #a0a0a0; }
.doctabs > button:first-child { width: 65px; padding-left: 12px; }
.doctab { display: flex; gap: 14px; padding: 0 10px 0 12px; background: #a0a0a0; color: #f4f4f4; }
.doctabs .more { margin-left: auto; padding-right: 6px; }
.viewport { display: grid; flex: 1; grid-template: minmax(0, 1fr) 17px / minmax(0, 1fr) 17px; min-height: 0; border: solid #a0a0a0; border-width: 0 1px 1px; }
.canvas { position: relative; overflow: hidden; background: #f0f0f0; }
.vbar, .hbar { display: flex; background: #eaeaea; }
.vbar { flex-direction: column; }
.vbar button, .hbar button { justify-content: center; width: 17px; height: 17px; }
.track { flex: 1; }
.thumb { background: #cdcdcd; }
.vbar .thumb { height: 38%; }
.hbar .thumb { width: 40%; height: 100%; }
.wires { position: absolute; left: 0; top: 0; }

/* diagram entities */
.entity { position: absolute; border: 1px solid #429a5a; border-radius: 4px; background: #e1f0e5; box-shadow: 1px 1px 1px #9fc8ab; font: 11px/18px "DejaVu Sans Condensed", "Noto Sans CJK SC", sans-serif; white-space: nowrap; overflow: hidden; }
.entity h4 { display: flex; align-items: center; justify-content: center; gap: 9px; height: 30px; background: #429a5a; color: #fff; font-size: 13px; font-weight: bold; }
.entity h4 span { font-size: 15px; }
.entity h4 svg { position: absolute; left: 3px; top: 9px; z-index: 0; }
.entity ul { padding: 8px 0 7px 8px; }
.entity ul + ul { border-top: 1px solid #429a5a; }
.entity li { display: flex; align-items: center; gap: 2px; height: 18px; }
.entity li svg { margin-bottom: 2px; }
.entity.fact { border-color: #b04a76; background: #f4e4ec; box-shadow: 1px 1px 1px #dcadc2; }
.fact h4 { background: #b04a76; }
.entity.fact ul + ul { border-color: #b04a76; }
.employees { left: 18px; top: 21px; width: 230px; height: 387px; }
.products { left: 18px; top: 479px; width: 231px; height: 260px; }
.sales { left: 442px; top: 131px; width: 224px; height: 441px; }
.customers { left: 851px; top: 48px; width: 205px; height: 297px; }
.date { left: 881px; top: 403px; width: 191px; height: 207px; }

/* check results */
.checks { height: 96px; flex: none; padding: 0 1px; }
.toolbar { display: flex; align-items: center; flex: none; height: 24px; padding: 0 8px 0 5px; }
.toolbar button { height: 24px; gap: 4px; padding: 0 7px; }
.toolbar button:first-child { gap: 7px; padding-left: 9px; }
.toolbar .action { gap: 5px; padding: 0 8px; }
.toolbar .pressed { background: #c3c3c3; }
.sep { width: 1px; height: 22px; margin: 0 3px; background: #cfcfcf; }
.toolbar .search { width: 174px; margin-left: auto; }
.grid { width: 100%; border-collapse: collapse; table-layout: fixed; background: #fff; }
.grid th { height: 24px; padding: 0 4px; border-right: 1px solid #bfc2c9; border-bottom: 1px solid #bfc2c9; background: #d0d3da; font-weight: normal; text-align: left; }
.grid th:last-child { border-right: 0; }
.grid td { height: 20px; padding: 0; }
.c-num { width: 29px; }
.c-mark { width: 30px; }
.c-desc { width: 599px; }
.checks::after { content: ""; flex: 1; background: #fff; }

/* standards */
.right { width: 378px; flex: none; padding: 0 1px; }
.standards { flex: 1; border: 1px solid #b8b8b8; border-top: 0; background: #fff; }
.c-name { width: 167px; }
.c-ver { width: 94px; }
.sorted { display: flex; align-items: center; justify-content: space-between; }
.cell { display: flex; align-items: center; height: 20px; padding-left: 7px; }
.cell.sub { padding-left: 25px; }
.cell .ico { margin-right: 1px; }
.cell span { padding: 0 4px; }
.sel { background: #e5f1fa; }
.cell span { line-height: 18px; }
.sel .cell span { flex: 1; height: 20px; border: 1px dotted #222; padding: 0 3px; color: #222; }
.foottabs { display: flex; flex: none; height: 31px; padding: 0 3px 2px; }
.foottabs button { padding: 0 6px; }
.foottabs .on { background: #d9d9d9; color: #222; }

/* status bar */
.status { display: flex; align-items: center; gap: 7px; flex: none; height: 29px; padding: 6px 8px 0 4px; }
.report { margin-left: 7px; }
.mail { margin-right: 6px; }
.fill { flex: 1; }
.status .sep { height: 20px; margin: 0; }
.net, .auto { display: flex; align-items: center; gap: 5px; }
.auto input {
  width: 73px; height: 22px; margin: 0; padding: 2px; appearance: none; border: 1px solid #a0a0a0;
  background: linear-gradient(#666, #666) 0 0 / 18px 100% no-repeat border-box, linear-gradient(#e5e5e5, #e5e5e5) content-box, #fff;
}
```
